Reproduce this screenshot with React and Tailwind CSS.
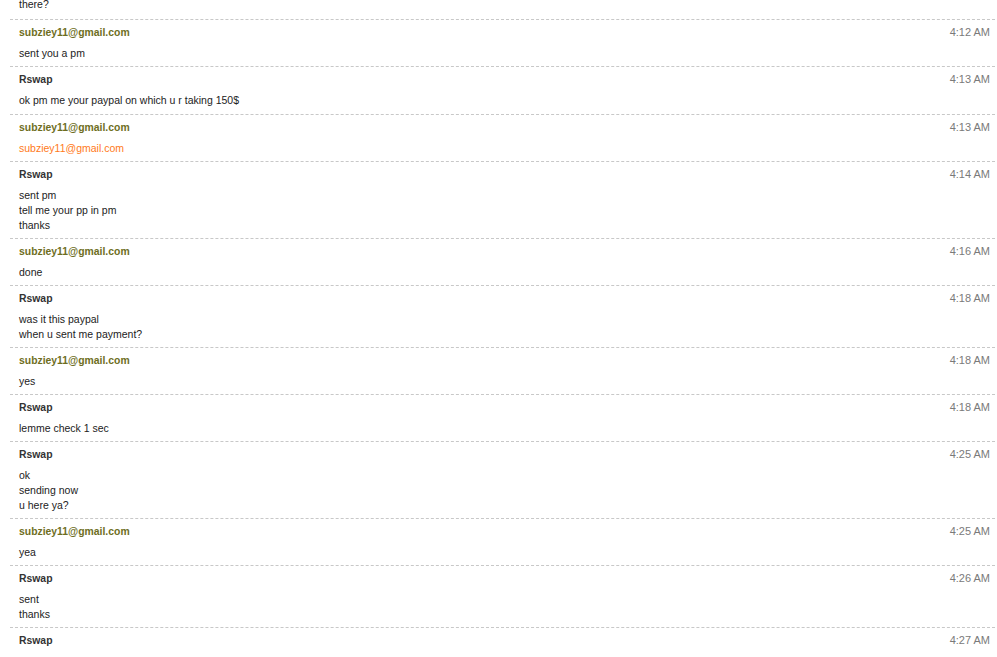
import React from "react";

const messages = [
  { from: "subziey11@gmail.com", time: "4:12 AM", lines: ["sent you a pm"] },
  { from: "Rswap", time: "4:13 AM", lines: ["ok pm me your paypal on which u r taking 150$"], extra: true },
  { from: "subziey11@gmail.com", time: "4:13 AM", lines: ["subziey11@gmail.com"], link: true },
  { from: "Rswap", time: "4:14 AM", lines: ["sent pm", "tell me your pp in pm", "thanks"] },
  { from: "subziey11@gmail.com", time: "4:16 AM", lines: ["done"] },
  { from: "Rswap", time: "4:18 AM", lines: ["was it this paypal", "when u sent me payment?"] },
  { from: "subziey11@gmail.com", time: "4:18 AM", lines: ["yes"] },
  { from: "Rswap", time: "4:18 AM", lines: ["lemme check 1 sec"] },
  { from: "Rswap", time: "4:25 AM", lines: ["ok", "sending now", "u here ya?"] },
  { from: "subziey11@gmail.com", time: "4:25 AM", lines: ["yea"] },
  { from: "Rswap", time: "4:26 AM", lines: ["sent", "thanks"] },
  { from: "Rswap", time: "4:27 AM", lines: [] },
];

const Message = ({ m }) => {
  const isEmail = m.from.includes("@");
  return (
    <div className="border-t border-dashed border-[#c8c8c8]">
      <div className="flex justify-between pt-[6px] pl-[9px] pr-[5px] leading-[14px]">
        <span
          className={`font-bold text-[10.4px] ${isEmail ? "text-[#6e6e1e]" : "text-[#333333]"}`}
        >
          {m.from}
        </span>
        <span className="text-[#7a7a7a] text-[11px] -mt-[1px]">{m.time}</span>
      </div>
      {m.lines.length > 0 && (
        <div
          className={`mt-[6px] pl-[9px] leading-[15px] text-[10.5px] ${m.extra ? "pb-[6px]" : "pb-[5px]"} ${
            m.link ? "text-[#ff7a1a]" : "text-[#222222]"
          }`}
        >
          {m.lines.map((l, i) => (
            <div key={i}>{l}</div>
          ))}
        </div>
      )}
    </div>
  );
};

export default function App() {
  return (
    <div className="h-[657px] overflow-hidden bg-white font-['Liberation_Sans',Arial,sans-serif] text-[11px]">
      <div className="ml-[10px] mr-[2px]">
        {/* tail of previous message */}
        <div className="-mt-[3px] pb-[7px] pl-[9px] leading-[15px] text-[10.5px] text-[#222222]">
          there?
        </div>
        {messages.map((m, idx) => (
          <Message key={idx} m={m} />
        ))}
      </div>
    </div>
  );
}
